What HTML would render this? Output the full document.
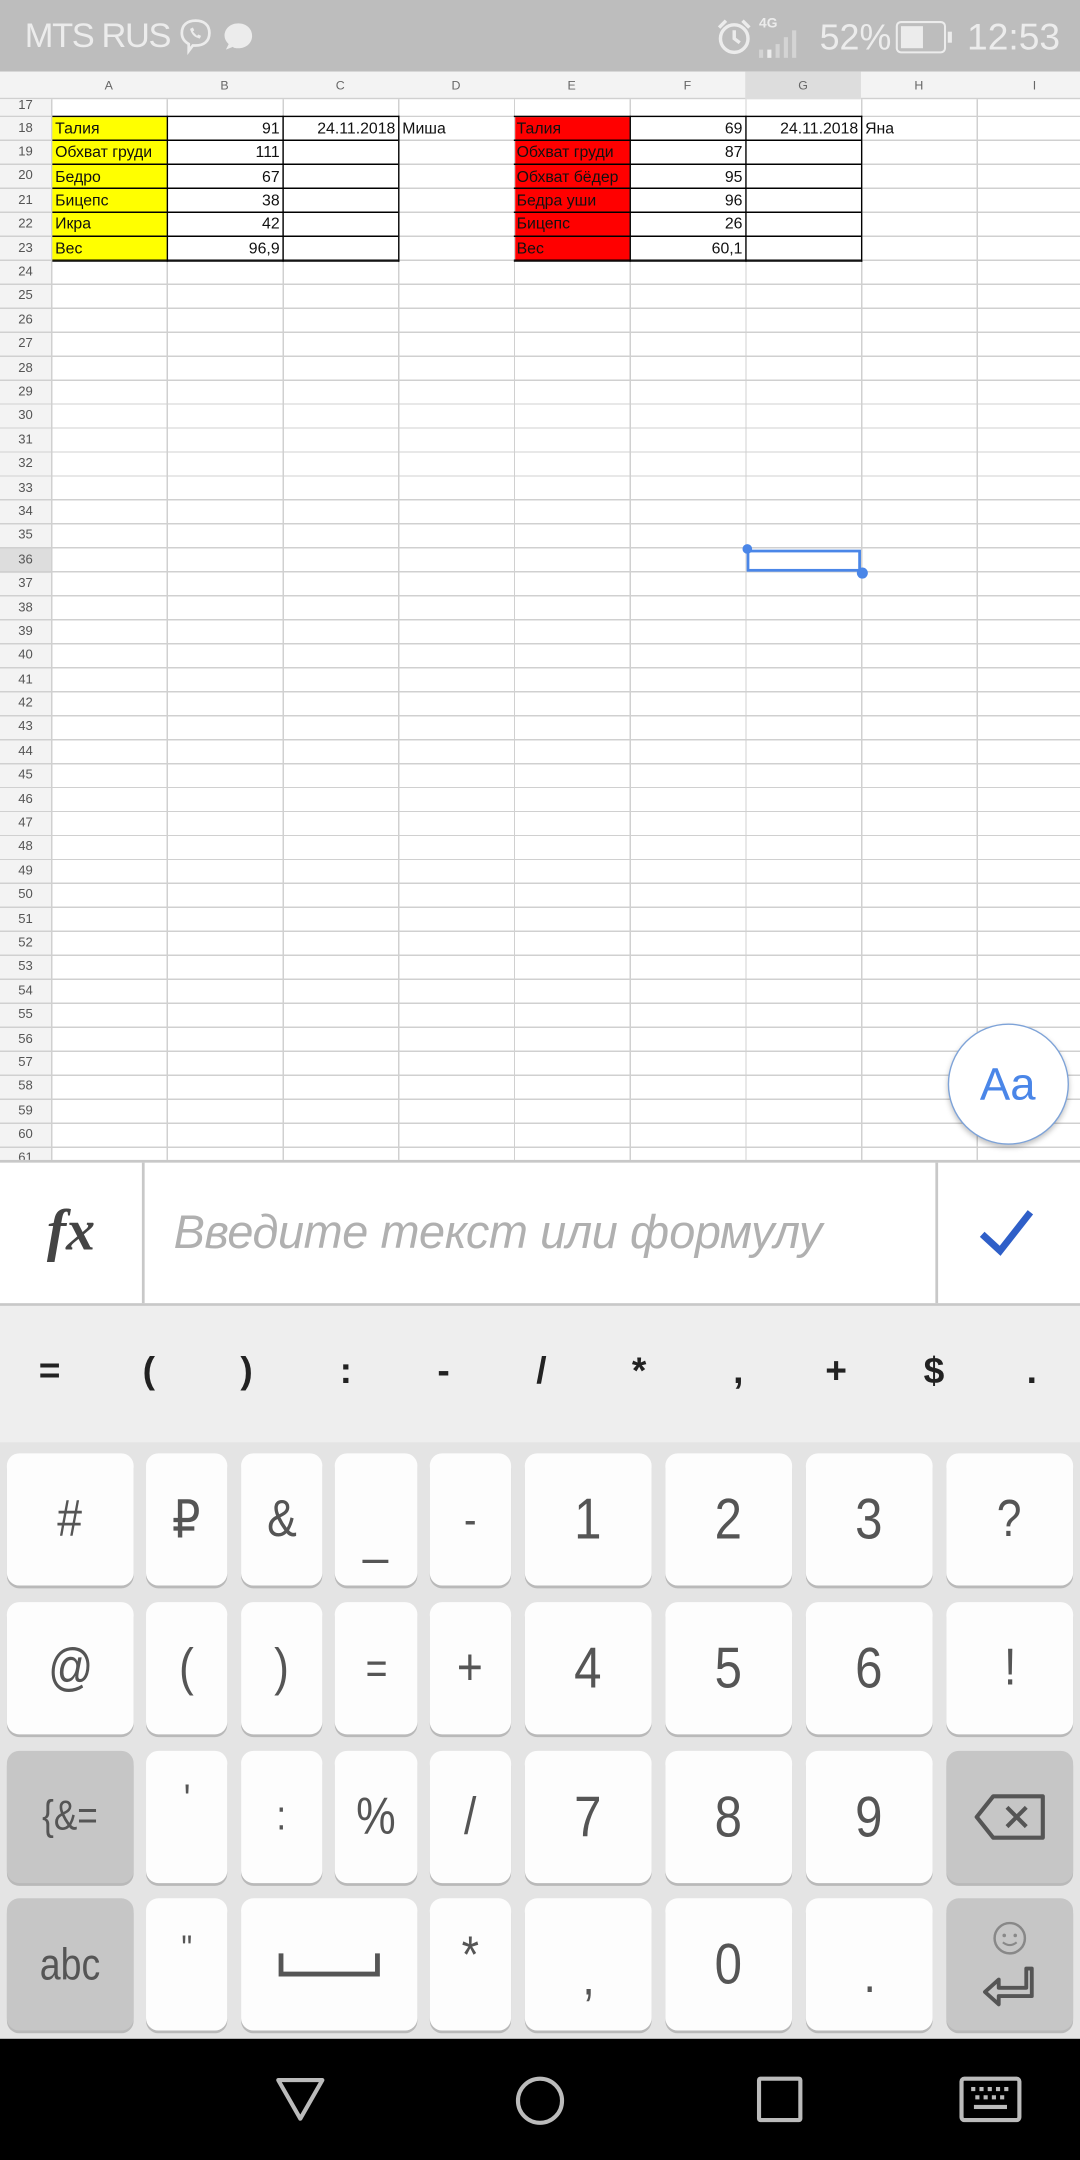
<!DOCTYPE html>
<html><head><meta charset="utf-8">
<style>
*{margin:0;padding:0;box-sizing:border-box}
html,body{width:1080px;height:2160px;overflow:hidden;background:#fff}
#s{position:absolute;left:0;top:0;width:784px;height:1568px;transform:scale(1.377551);transform-origin:0 0;font-family:"Liberation Sans","Noto Sans CJK SC",sans-serif;overflow:hidden}
.a{position:absolute}
#status{left:0;top:0;width:784px;height:52px;background:#bdbdbd;color:#ececec}
#grid{left:0;top:72px;width:784px;height:771px;background:
repeating-linear-gradient(to right,transparent 0,transparent 37px,#d0d0d0 37px,#d0d0d0 38px,transparent 38px,transparent 121px,#d0d0d0 121px,#d0d0d0 122px,transparent 122px,transparent 205px,#d0d0d0 205px,#d0d0d0 206px,transparent 206px,transparent 289px,#d0d0d0 289px,#d0d0d0 290px,transparent 290px,transparent 373px,#d0d0d0 373px,#d0d0d0 374px,transparent 374px,transparent 457px,#d0d0d0 457px,#d0d0d0 458px,transparent 458px,transparent 541px,#d0d0d0 541px,#d0d0d0 542px,transparent 542px,transparent 625px,#d0d0d0 625px,#d0d0d0 626px,transparent 626px,transparent 709px,#d0d0d0 709px,#d0d0d0 710px,transparent 710px,transparent 784px)}
#hlines{left:0;top:84.2px;width:784px;height:760px;background:repeating-linear-gradient(to bottom,#d0d0d0 0,#d0d0d0 1px,transparent 1px,transparent 17.4px)}
#rowhdr{left:0;top:72px;width:37px;height:771px;background:#f3f3f3}
#colhdr{left:0;top:52px;width:784px;height:20px;background:#f3f3f3;border-bottom:1px solid #d0d0d0}
.ch{position:absolute;top:0;height:20px;line-height:20px;text-align:center;font-size:9px;color:#666;width:84px}
.rn{height:17.4px;line-height:17.4px;text-align:center;font-size:9.5px;color:#555;width:37px}
.c{position:absolute;height:17.4px;line-height:18px;font-size:11.5px;color:#111;padding:0 2px;white-space:nowrap;overflow:hidden}
.r{text-align:right}
#fbar{left:0;top:842px;width:784px;height:106px;background:#fff;border-top:2px solid #c8c8c8;border-bottom:2px solid #c8c8c8}
#sym{left:0;top:948px;width:784px;height:100px;background:#eeeeee}
.sy{position:absolute;top:32px;width:30px;text-align:center;font-size:27px;color:#222;font-weight:bold}
#kb{left:0;top:1047px;width:784px;height:433px;background:#e4e4e4}
.k{position:absolute;background:#fdfdfd;border-radius:9px;box-shadow:0 2px 0 #b9b9b9;color:#555;text-align:center;font-size:38px;display:flex;align-items:center;justify-content:center}
.k>b{font-weight:normal;display:inline-block;transform:scaleX(.85)}
.g{background:#c6c6c6}
#nav{left:0;top:1480px;width:784px;height:88px;background:#000}
</style></head><body><div id="s">

<div class="a" id="status">
 <div class="a" style="left:18px;top:12px;font-size:25px;letter-spacing:-1px">MTS RUS</div>
 <svg class="a" style="left:128px;top:12px" width="28" height="28" viewBox="0 0 28 28"><path d="M14 3c6 0 10 3 10 9s-4 9-10 9h-2l-3 4v-5c-3-2-5-4-5-8 0-6 4-9 10-9z" fill="none" stroke="#ececec" stroke-width="2"/><path d="M10 9c1 4 3 6 7 7l1-2-2-1-1 1c-1-1-2-2-3-3l1-1-1-2z" fill="#ececec"/></svg>
 <svg class="a" style="left:161px;top:15px" width="24" height="24" viewBox="0 0 24 24"><path d="M12 2c6 0 10 4 10 9s-4 9-10 9c-2 0-3 0-4-1l-5 2 2-4c-2-2-3-4-3-6 0-5 4-9 10-9z" fill="#ececec"/></svg>
 <svg class="a" style="left:518px;top:12px" width="30" height="30" viewBox="0 0 30 30"><circle cx="15" cy="16" r="10" fill="none" stroke="#ececec" stroke-width="2.5"/><path d="M15 10v6l4 3" fill="none" stroke="#ececec" stroke-width="2.5"/><path d="M4 8l5-5M26 8l-5-5" stroke="#ececec" stroke-width="2.5"/></svg>
 <div class="a" style="left:551px;top:12px;font-size:10px;font-weight:bold;color:#ececec">4G</div>
 <svg class="a" style="left:551px;top:18px" width="40" height="26" viewBox="0 0 40 26"><rect x="6" y="18" width="3" height="6" fill="#ececec"/><rect x="12" y="14" width="3" height="10" fill="#d4d4d4"/><rect x="18" y="9" width="3" height="15" fill="#d4d4d4"/><rect x="24" y="4" width="3" height="20" fill="#d4d4d4"/><rect x="0" y="18" width="3" height="6" fill="#d4d4d4"/></svg>
 <div class="a" style="left:595px;top:12px;font-size:26px">52%</div>
 <svg class="a" style="left:650px;top:15px" width="42" height="24" viewBox="0 0 42 24"><rect x="1" y="1" width="35" height="22" rx="3" fill="none" stroke="#ececec" stroke-width="1.5"/><rect x="4" y="4" width="16" height="16" fill="#ececec"/><rect x="38" y="8" width="3" height="8" fill="#ececec"/></svg>
 <div class="a" style="left:702px;top:12px;font-size:27px">12:53</div>
</div>

<div class="a" id="colhdr">
 <div class="ch" style="left:37px">A</div><div class="ch" style="left:121px">B</div><div class="ch" style="left:205px">C</div><div class="ch" style="left:289px">D</div><div class="ch" style="left:373px">E</div><div class="ch" style="left:457px">F</div><div class="ch" style="left:541px;background:#dddddd">G</div><div class="ch" style="left:625px">H</div><div class="ch" style="left:709px">I</div>
</div>
<div class="a" id="rowhdr"></div>
<div class="a" style="left:0;top:398.3px;width:37px;height:17.4px;background:#dddddd"></div>
<div class="a" id="grid"></div>
<div class="a" id="hlines"></div>

<div class="a" style="left:0;top:68px">
<div class="rn">17</div></div>
<div class="a" style="left:0;top:84.7px">
<div class="rn">18</div><div class="rn">19</div><div class="rn">20</div><div class="rn">21</div><div class="rn">22</div><div class="rn">23</div><div class="rn">24</div><div class="rn">25</div><div class="rn">26</div><div class="rn">27</div><div class="rn">28</div><div class="rn">29</div><div class="rn">30</div><div class="rn">31</div><div class="rn">32</div><div class="rn">33</div><div class="rn">34</div><div class="rn">35</div><div class="rn">36</div><div class="rn">37</div><div class="rn">38</div><div class="rn">39</div><div class="rn">40</div><div class="rn">41</div><div class="rn">42</div><div class="rn">43</div><div class="rn">44</div><div class="rn">45</div><div class="rn">46</div><div class="rn">47</div><div class="rn">48</div><div class="rn">49</div><div class="rn">50</div><div class="rn">51</div><div class="rn">52</div><div class="rn">53</div><div class="rn">54</div><div class="rn">55</div><div class="rn">56</div><div class="rn">57</div><div class="rn">58</div><div class="rn">59</div><div class="rn">60</div><div class="rn">61</div>
</div>

<div class="a" style="left:38px;top:84.7px;width:83px;height:104.4px;background:#ffff00"></div>
<div class="a" style="left:373.5px;top:84.7px;width:83.5px;height:104.4px;background:#ff0000"></div>
<div class="a" style="left:38px;top:84.2px;width:251.5px;height:105.4px;border:1px solid #000;border-left:none;background:repeating-linear-gradient(to bottom,transparent 0,transparent 16.4px,#000 16.4px,#000 17.4px)"></div>
<div class="a" style="left:121px;top:84.2px;width:85px;height:105.4px;border-left:1px solid #000;border-right:1px solid #000"></div>
<div class="a" style="left:373px;top:84.2px;width:253px;height:105.4px;border:1px solid #000;border-left:none;background:repeating-linear-gradient(to bottom,transparent 0,transparent 16.4px,#000 16.4px,#000 17.4px)"></div>
<div class="a" style="left:457px;top:84.2px;width:85px;height:105.4px;border-left:1px solid #000;border-right:1px solid #000"></div>

<div class="c" style="left:38px;top:84.7px;width:83px">Талия</div>
<div class="c" style="left:38px;top:102.1px;width:83px">Обхват груди</div>
<div class="c" style="left:38px;top:119.5px;width:83px">Бедро</div>
<div class="c" style="left:38px;top:136.9px;width:83px">Бицепс</div>
<div class="c" style="left:38px;top:154.3px;width:83px">Икра</div>
<div class="c" style="left:38px;top:171.7px;width:83px">Вес</div>
<div class="c r" style="left:121px;top:84.7px;width:84px">91</div>
<div class="c r" style="left:121px;top:102.1px;width:84px">111</div>
<div class="c r" style="left:121px;top:119.5px;width:84px">67</div>
<div class="c r" style="left:121px;top:136.9px;width:84px">38</div>
<div class="c r" style="left:121px;top:154.3px;width:84px">42</div>
<div class="c r" style="left:121px;top:171.7px;width:84px">96,9</div>
<div class="c r" style="left:205px;top:84.7px;width:84px">24.11.2018</div>
<div class="c" style="left:290px;top:84.7px;width:84px">Миша</div>

<div class="c" style="left:373px;top:84.7px;width:84px">Талия</div>
<div class="c" style="left:373px;top:102.1px;width:84px">Обхват груди</div>
<div class="c" style="left:373px;top:119.5px;width:84px">Обхват бёдер</div>
<div class="c" style="left:373px;top:136.9px;width:84px">Бедра уши</div>
<div class="c" style="left:373px;top:154.3px;width:84px">Бицепс</div>
<div class="c" style="left:373px;top:171.7px;width:84px">Вес</div>
<div class="c r" style="left:457px;top:84.7px;width:84px">69</div>
<div class="c r" style="left:457px;top:102.1px;width:84px">87</div>
<div class="c r" style="left:457px;top:119.5px;width:84px">95</div>
<div class="c r" style="left:457px;top:136.9px;width:84px">96</div>
<div class="c r" style="left:457px;top:154.3px;width:84px">26</div>
<div class="c r" style="left:457px;top:171.7px;width:84px">60,1</div>
<div class="c r" style="left:541px;top:84.7px;width:84px">24.11.2018</div>
<div class="c" style="left:626px;top:84.7px;width:84px">Яна</div>

<div class="a" style="left:542px;top:398.5px;width:83px;height:16.5px;border:2px solid #4a86e8"></div>
<div class="a" style="left:538.5px;top:395px;width:7px;height:7px;border-radius:50%;background:#4a86e8"></div>
<div class="a" style="left:621.5px;top:411.5px;width:8px;height:8px;border-radius:50%;background:#4a86e8"></div>

<div class="a" style="left:687.5px;top:743px;width:88px;height:88px;border-radius:50%;background:#fff;border:1.5px solid #7ea3d8;box-shadow:0 2px 4px rgba(0,0,0,.25);color:#4a86e8;font-size:33px;text-align:center;line-height:86px">Aa</div>

<div class="a" id="fbar">
 <div class="a" style="left:0;top:0;width:105px;height:102px;border-right:2px solid #c8c8c8;text-align:center;line-height:100px;font-family:'Liberation Serif',serif;font-style:italic;font-weight:bold;font-size:42px;color:#444">fx</div>
 <div class="a" style="left:126px;top:32px;font-size:34px;font-style:italic;color:#b0b0b0;letter-spacing:-0.3px">Введите текст или формулу</div>
 <div class="a" style="left:679px;top:0;width:2px;height:102px;background:#c8c8c8"></div>
 <svg class="a" style="left:710px;top:32px" width="42" height="40" viewBox="0 0 42 40"><path d="M3 20l13 12L38 4" fill="none" stroke="#2f5fc8" stroke-width="5"/></svg>
</div>

<div class="a" id="sym">
 <div class="sy" style="left:21px">=</div><div class="sy" style="left:93px">(</div><div class="sy" style="left:164px">)</div><div class="sy" style="left:236px">:</div><div class="sy" style="left:307px">-</div><div class="sy" style="left:378px">/</div><div class="sy" style="left:449px">*</div><div class="sy" style="left:521px">,</div><div class="sy" style="left:592px">+</div><div class="sy" style="left:663px">$</div><div class="sy" style="left:734px">.</div>
</div>

<div class="a" id="kb"></div>
<div class="k" style="left:5px;top:1055px;width:92px;height:96px"><b>#</b></div>
<div class="k" style="left:106px;top:1055px;width:59px;height:96px"><b>₽</b></div>
<div class="k" style="left:175px;top:1055px;width:59px;height:96px"><b>&amp;</b></div>
<div class="k" style="left:243px;top:1055px;width:60px;height:96px"><b style="position:relative;top:12px">_</b></div>
<div class="k" style="left:312px;top:1055px;width:59px;height:96px;font-size:32px"><b>-</b></div>
<div class="k" style="left:381px;top:1055px;width:92px;height:96px;font-size:42px"><b>1</b></div>
<div class="k" style="left:483px;top:1055px;width:92px;height:96px;font-size:42px"><b>2</b></div>
<div class="k" style="left:585px;top:1055px;width:92px;height:96px;font-size:42px"><b>3</b></div>
<div class="k" style="left:687px;top:1055px;width:92px;height:96px"><b>?</b></div>
<div class="k" style="left:5px;top:1163px;width:92px;height:96px"><b>@</b></div>
<div class="k" style="left:106px;top:1163px;width:59px;height:96px"><b>(</b></div>
<div class="k" style="left:175px;top:1163px;width:59px;height:96px"><b>)</b></div>
<div class="k" style="left:243px;top:1163px;width:60px;height:96px;font-size:32px"><b>=</b></div>
<div class="k" style="left:312px;top:1163px;width:59px;height:96px"><b>+</b></div>
<div class="k" style="left:381px;top:1163px;width:92px;height:96px;font-size:42px"><b>4</b></div>
<div class="k" style="left:483px;top:1163px;width:92px;height:96px;font-size:42px"><b>5</b></div>
<div class="k" style="left:585px;top:1163px;width:92px;height:96px;font-size:42px"><b>6</b></div>
<div class="k" style="left:687px;top:1163px;width:92px;height:96px"><b>!</b></div>
<div class="k g" style="left:5px;top:1271px;width:92px;height:96px;font-size:30px"><b>{&amp;=</b></div>
<div class="k" style="left:106px;top:1271px;width:59px;height:96px;font-size:30px"><b style="position:relative;top:-12px">'</b></div>
<div class="k" style="left:175px;top:1271px;width:59px;height:96px;font-size:30px"><b>:</b></div>
<div class="k" style="left:243px;top:1271px;width:60px;height:96px"><b>%</b></div>
<div class="k" style="left:312px;top:1271px;width:59px;height:96px"><b>/</b></div>
<div class="k" style="left:381px;top:1271px;width:92px;height:96px;font-size:42px"><b>7</b></div>
<div class="k" style="left:483px;top:1271px;width:92px;height:96px;font-size:42px"><b>8</b></div>
<div class="k" style="left:585px;top:1271px;width:92px;height:96px;font-size:42px"><b>9</b></div>
<div class="k g" style="left:687px;top:1271px;width:92px;height:96px"><svg width="52" height="34" viewBox="0 0 52 34"><path d="M14 2h36v30H14L2 17z" fill="none" stroke="#555" stroke-width="3" stroke-linejoin="round"/><path d="M24 10l14 14M38 10L24 24" stroke="#555" stroke-width="3"/></svg></div>
<div class="k g" style="left:5px;top:1378px;width:92px;height:96px;font-size:32px"><b>abc</b></div>
<div class="k" style="left:106px;top:1378px;width:59px;height:96px;font-size:26px"><b style="position:relative;top:-12px">"</b></div>
<div class="k" style="left:175px;top:1378px;width:128px;height:96px"><svg width="74" height="20" viewBox="0 0 74 20"><path d="M2 2v15h70V2" fill="none" stroke="#555" stroke-width="3.5"/></svg></div>
<div class="k" style="left:312px;top:1378px;width:59px;height:96px"><b style="position:relative;top:-6px">*</b></div>
<div class="k" style="left:381px;top:1378px;width:92px;height:96px"><b style="position:relative;top:10px">,</b></div>
<div class="k" style="left:483px;top:1378px;width:92px;height:96px;font-size:42px"><b>0</b></div>
<div class="k" style="left:585px;top:1378px;width:92px;height:96px"><b style="position:relative;top:8px">.</b></div>
<div class="k g" style="left:687px;top:1378px;width:92px;height:96px"><svg width="44" height="66" viewBox="0 0 44 66"><circle cx="22" cy="14" r="11" fill="none" stroke="#888" stroke-width="1.8"/><circle cx="18" cy="12" r="1.3" fill="#888"/><circle cx="26" cy="12" r="1.3" fill="#888"/><path d="M17 17q5 4 10 0" fill="none" stroke="#888" stroke-width="1.5"/><path d="M34 36v14H14v-6L4 53l10 9v-6h24V36z" fill="none" stroke="#555" stroke-width="2.8" stroke-linejoin="round"/></svg></div>

<div class="a" id="nav">
 <svg class="a" style="left:199px;top:26px" width="38" height="36" viewBox="0 0 38 36"><path d="M3 4h32L19 32z" fill="none" stroke="#bbb" stroke-width="3" stroke-linejoin="round"/></svg>
 <svg class="a" style="left:372px;top:25px" width="40" height="40" viewBox="0 0 40 40"><circle cx="20" cy="20" r="16" fill="none" stroke="#bbb" stroke-width="3"/></svg>
 <svg class="a" style="left:548px;top:26px" width="36" height="36" viewBox="0 0 36 36"><rect x="3" y="3" width="30" height="30" rx="1" fill="none" stroke="#bbb" stroke-width="3"/></svg>
 <svg class="a" style="left:696px;top:26px" width="46" height="36" viewBox="0 0 46 36"><rect x="2" y="3" width="42" height="30" rx="2" fill="none" stroke="#bbb" stroke-width="3"/><g fill="#bbb"><rect x="9" y="9" width="3" height="3"/><rect x="15" y="9" width="3" height="3"/><rect x="21" y="9" width="3" height="3"/><rect x="27" y="9" width="3" height="3"/><rect x="33" y="9" width="3" height="3"/><rect x="12" y="15" width="3" height="3"/><rect x="18" y="15" width="3" height="3"/><rect x="24" y="15" width="3" height="3"/><rect x="30" y="15" width="3" height="3"/><rect x="11" y="22" width="24" height="3"/></g></svg>
</div>

</div></body></html>
